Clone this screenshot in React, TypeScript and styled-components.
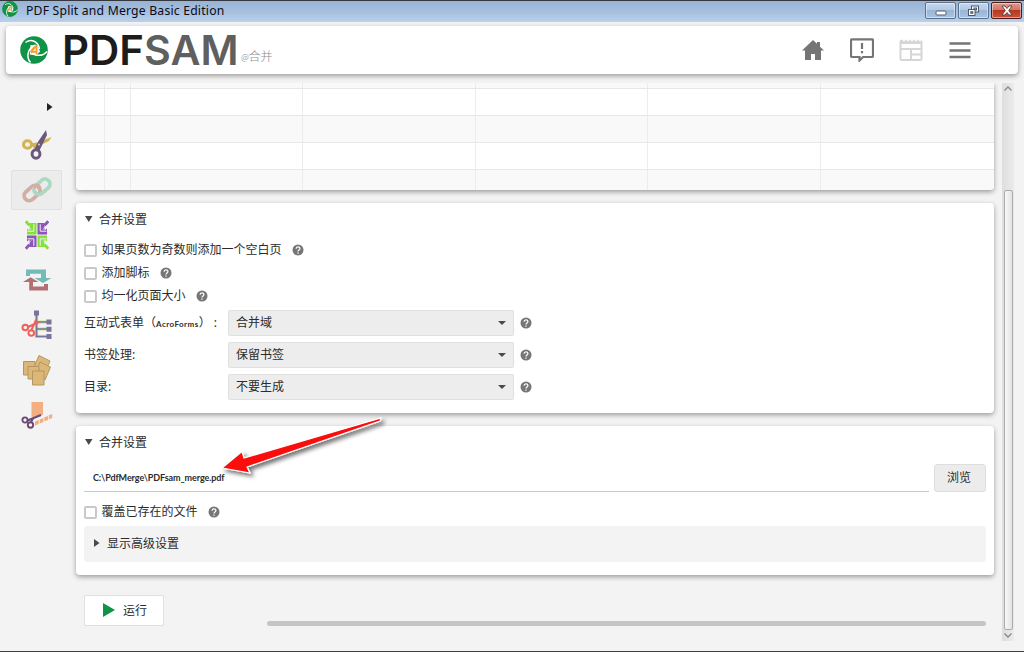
import React from 'react';
import styled, { createGlobalStyle } from 'styled-components';

const Global = createGlobalStyle`
  *{box-sizing:border-box}
  html,body{margin:0;padding:0;overflow:hidden}
  body{font-family:"Noto Sans","Noto Sans CJK SC",sans-serif;font-size:12px;color:#2b2b2b;background:#f3f3f3}
  svg{display:block;flex:none}
`;

const Window = styled.div`
  width:1024px;height:652px;display:flex;flex-direction:column;background:#f3f3f3;overflow:hidden;
  border-bottom:1px solid #3c434f;
`;
const TitleBar = styled.header`
  height:22px;flex:none;display:flex;align-items:flex-start;padding:0 2px 0 2px;
  border-top:1px solid #33383f;background:linear-gradient(#98b3d3,#a4bfdf 50%,#b9d1ea);
`;
const Title = styled.span`
  flex:1;margin-left:8px;font:12.2px/19px "Noto Sans",sans-serif;color:#0a0a12;white-space:nowrap;letter-spacing:.2px;
`;
const WinButton = styled.button<{ $close?: boolean }>`
  width:31px;height:17px;margin:1px 0 0 2px;padding:0;display:flex;align-items:center;justify-content:center;
  border:1px solid ${p => (p.$close ? '#4f1a20' : '#5a718f')};border-radius:2px;
  box-shadow:inset 0 0 0 1px rgba(255,255,255,.45);
  background:${p => (p.$close
    ? 'linear-gradient(#dc9a8c,#cf7764 45%,#b8361f 50%,#c8553a)'
    : 'linear-gradient(#c4d6eb,#b3c9e3 45%,#9ab5d5 50%,#aac4e0)')};
`;
const Header = styled.div`
  flex:none;height:48px;margin:4px 6px 0;padding:0 46px 0 14px;display:flex;align-items:center;
  background:#fff;border-radius:4px;box-shadow:0 2px 5px rgba(0,0,0,.36);
`;
const Brand = styled.div`
  flex:1;display:flex;align-items:center;
`;
const Wordmark = styled.svg`
  margin-left:14px;font-family:Inter,sans-serif;font-size:41px;
`;
const ModuleName = styled.span`
  margin:15px 0 0 1px;font-size:12px;line-height:14px;color:#8c8c8c;font-weight:300;
  i{font-size:9px}
`;
const Tools = styled.nav`
  display:flex;gap:25px;align-items:center;
`;
const Body = styled.div`
  flex:1;min-height:0;margin-top:9px;display:flex;
`;
const Sidebar = styled.aside`
  width:76px;flex:none;padding-left:11px;display:flex;flex-direction:column;gap:5px;
`;
const Expand = styled.div`
  height:37px;padding:20px 0 0 36px;
`;
const ModuleButton = styled.div<{ $active?: boolean }>`
  width:51px;height:40px;display:flex;align-items:center;justify-content:center;border-radius:2px;
  border:1px solid ${p => (p.$active ? '#e0e0e0' : 'transparent')};
  background:${p => (p.$active ? '#ececec' : 'transparent')};
`;
const Main = styled.main`
  box-sizing:content-box;width:918px;flex:none;overflow:hidden;margin-left:-6px;padding:0 8px 0 6px;
  display:flex;flex-direction:column;
`;
const Card = styled.section`
  flex:none;background:#fff;border-radius:4px;box-shadow:0 2px 5px rgba(0,0,0,.36);
`;
const Grid = styled(Card)`
  height:107px;margin-bottom:13px;border-radius:0 0 4px 4px;overflow:hidden;display:flex;flex-direction:column;
`;
const GridRow = styled.div<{ $odd?: boolean; $h: number }>`
  height:${p => p.$h}px;flex:none;display:grid;grid-template-columns:29px 26px 172px 173px 172px 173px 1fr;
  background:${p => (p.$odd ? '#f9f9f9' : '#fff')};
  border-bottom:${p => (p.$h === 21 ? 0 : 1)}px solid #e8e8e8;
  span{border-right:1px solid #ececec}
  span:last-child{border:0}
`;
const Settings = styled(Card)`
  height:210px;padding:7px 8px 8px;margin-bottom:13px;
`;
const Output = styled(Card)`
  height:149px;padding:7px 8px 8px;
`;
const PaneTitle = styled.h2`
  height:18px;margin:0;font-size:12px;font-weight:400;display:flex;align-items:center;gap:6px;
`;
const CheckRow = styled.label`
  height:23px;display:flex;align-items:center;
`;
const Checks = styled.div`
  padding-top:10px;
`;
const Box = styled.i`
  width:13px;height:13px;margin:2px 4px 0 0;border:2px solid #c9c9c9;border-radius:2px;background:#fff;
`;
const CheckText = styled.span`
  margin-right:11px;line-height:18px;padding-left:.4px;
`;
const Fields = styled.div`
  padding-top:3px;display:flex;flex-direction:column;gap:6px;
`;
const Field = styled.div`
  height:26px;display:grid;grid-template-columns:144px 286px 18px;align-items:center;
`;
const FieldLabel = styled.span`
  white-space:nowrap;padding-bottom:2px;
  small{font:700 8px Lato,sans-serif;letter-spacing:.45px}
  b{font-weight:400;margin-left:3px}
`;
const Select = styled.div`
  height:26px;padding:0 7px;display:flex;align-items:center;justify-content:space-between;
  background:#ededed;border:1px solid #e0e0e0;border-radius:2px;
`;
const SelectValue = styled.span`
  padding-bottom:2px;
`;
const HelpSlot = styled.span`
  padding-left:6px;
`;
const FileRow = styled.div`
  height:28px;margin-top:13px;display:flex;justify-content:space-between;
`;
const PathField = styled.div`
  width:845px;height:28px;border-bottom:1px solid #c9c9c9;padding-left:9px;font:700 9px/28px Lato,sans-serif;letter-spacing:-.09px;
`;
const Browse = styled.button`
  width:52px;height:28px;padding:0 2px 2px 0;border:1px solid #dedede;border-radius:3px;background:#ececec;font:inherit;color:inherit;
`;
const Overwrite = styled(CheckRow)`
  margin-top:8px;
`;
const Advanced = styled.div`
  height:36px;margin-top:3px;padding:0 0 2px 10px;display:flex;align-items:center;gap:7px;background:#f3f3f3;border-radius:3px;
`;
const Footer = styled.footer`
  margin:20px 8px 0;display:flex;align-items:flex-end;justify-content:space-between;
`;
const Run = styled.button`
  width:80px;height:31px;padding:0 0 1px 18px;display:flex;align-items:center;gap:8px;background:#fff;
  border:1px solid #dfdfdf;border-radius:2px;font:inherit;color:inherit;
`;
const Progress = styled.div`
  width:719px;height:5px;border-radius:3px;background:#c5c5c5;
`;
const ScrollTrack = styled.div`
  width:12px;height:558px;display:flex;flex-direction:column;align-items:center;justify-content:space-between;
  background:linear-gradient(90deg,#dedede,#ebebeb);
`;
const ScrollThumb = styled.div`
  width:9px;height:440px;margin:96px 0 0 1px;border:1px solid #aaa;border-radius:2px;
  background:linear-gradient(90deg,#f8f8f8,#e3e3e3);
`;
const ArrowOverlay = styled.svg`
  position:absolute;left:215px;top:410px;pointer-events:none;
`;

const Swirl = ({ size }: { size: number }) => (
  <svg width={size} height={size} viewBox="0 0 28 28">
    <circle cx="14" cy="14" r="13.8" fill="#0f9347" />
    <g fill="none" stroke="#fff" strokeWidth="1.5">
      <path d="M5.500 6.500C11 2.500 18 5 19.500 13" />
      <path d="M27 15.500C22 21.500 14 20 10.500 14.500" />
      <path d="M10.500 26.500C5.500 20.500 8 12 15.500 9" />
    </g>
    <path d="M10.500 9L17.500 9.500L20 15.500L16 19.500L9.800 18.500Z" fill="#fff" />
    <path d="M17.500 8.500V18.500H15.700V16.800H12.700L11.500 17.500L10 15.500Q12.500 10.500 17.500 8.500M15.600 12L13.200 14.800H15.600Z" fill="#f5a033" />
  </svg>
);

const Tri = ({ dir, color = '#4a4a4a' }: { dir: 'down' | 'right'; color?: string }) => (
  <svg width={dir === 'down' ? 9 : 6} height={dir === 'down' ? 6 : 8} viewBox={dir === 'down' ? '0 0 9 6' : '0 0 6 8'}>
    <path d={dir === 'down' ? 'M1 0H8.500L4.750 6Z' : 'M0 0L5.500 4L0 8Z'} fill={color} />
  </svg>
);

const Help = () => (
  <svg width="12" height="12" viewBox="0 0 12 12">
    <circle cx="6" cy="6" r="5.500" fill="#767676" />
    <path d="M4.100 4.700C4.100 2.200 7.900 2.200 7.900 4.600C7.900 5.900 6 6 6 7.400M6 8.400V9.700" fill="none" stroke="#fff" strokeWidth="1.250" />
  </svg>
);

const Scissors = () => (
  <svg width="32" height="32" viewBox="0 0 32 32">
    <path d="M10 14.500L18 13L30.500 8L28 12L13 19.500Z" fill="#d2b252" />
    <ellipse cx="6.500" cy="15.500" rx="4" ry="3.700" fill="none" stroke="#d2b252" strokeWidth="3" />
    <path d="M25 1L26 6L18.500 21.500L13 21L17.500 12Z" fill="#6a587b" />
    <ellipse cx="15" cy="25" rx="3.900" ry="4.200" fill="none" stroke="#6a587b" strokeWidth="3" />
    <circle cx="18" cy="15.500" r=".9" fill="#ddd" />
  </svg>
);
const Links = () => (
  <svg width="32" height="28" viewBox="0 0 32 28">
    <g fill="none" strokeWidth="3.800">
      <rect x="2" y="11.700" width="18" height="10" rx="5" transform="rotate(-42 11.500 16.700)" stroke="#d3aea3" />
      <rect x="12" y="5.700" width="18" height="10" rx="5" transform="rotate(-42 21 10.700)" stroke="#abd9c2" />
      <path d="M12.500 11L15.500 9.500Q18.800 9.500 18 13.500" stroke="#d3aea3" />
    </g>
  </svg>
);
const Quarter = ({ color, flip }: { color: string; flip: string }) => (
  <g transform={`matrix(${flip})`}>
    <path d="M4.500 3H11.500V14.500H2V8.500L4.500 10.500Z" fill={color} />
    <path d="M.8 1.200L4.500 5.500" stroke={color} strokeWidth="2.800" fill="none" />
    <path d="M2.500 11.200H8.800V4.200" stroke="#f3f3f3" strokeWidth="1" fill="none" />
    <path d="M2.500 5.500L6 9.500" stroke="#f3f3f3" strokeWidth=".8" fill="none" />
  </g>
);
const Mosaic = () => (
  <svg width="24" height="30" viewBox="0 0 24 30">
    <Quarter color="#83e13a" flip="1 0 0 1 0 0" />
    <Quarter color="#83e13a" flip="-1 0 0 -1 24 30" />
    <Quarter color="#8c55b9" flip="-1 0 0 1 24 0" />
    <Quarter color="#8c55b9" flip="1 0 0 -1 0 30" />
  </svg>
);
const Swap = () => (
  <svg width="30" height="24" viewBox="0 0 30 24">
    <path d="M4 1.500H24V10H29.500L21 15L12.500 10H19V5.800H8V8H4Z" fill="#73bbb7" />
    <path d="M26 22.500H7.200V14H1L8.500 9.300L16.500 14H11V18.500H22V16H26Z" fill="#b37074" />
  </svg>
);
const SplitTree = () => (
  <svg width="32" height="32" viewBox="0 0 32 32">
    <path d="M15.500 5V27.500H28M15.500 13H28M15.500 20H28" stroke="#c9e08b" strokeWidth="3.200" fill="none" />
    <path d="M15.500 5V27.500H28M15.500 13H28M15.500 20H28" stroke="#77759c" strokeWidth="1.700" fill="none" />
    <path d="M13 1.500h5v5h-5zM25.500 10.500h5v5h-5zM25.500 17.700h5v5h-5zM25.500 25h5v5h-5z" fill="#77759c" />
    <g fill="none" stroke="#ee6259" strokeWidth="2">
      <path d="M7 18L18 13M10 22L15 11" />
      <circle cx="4.300" cy="18.500" r="2.800" />
      <circle cx="10.300" cy="24" r="2.800" />
    </g>
  </svg>
);
const Pages = () => (
  <svg width="30" height="32" viewBox="0 0 30 32">
    <g fill="#dcb777" stroke="#b29763" strokeWidth="1">
      <path d="M17 1.500L28 7L22 21L11 15Z" />
      <path d="M18 8L28.500 13L23 26L13 20Z" />
      <path d="M1.500 7.500H13V21H1.500Z" />
      <path d="M6 12.500H17V25H6Z" />
      <path d="M10.500 17H22V31H10.500Z" />
    </g>
  </svg>
);
const CutPage = () => (
  <svg width="32" height="30" viewBox="0 0 32 30">
    <path d="M10.500 2H22V15L10.500 17Z" fill="#f3ae82" />
    <path d="M14 21.500l3.700-1.400v4l-3.700 1.400zM18.700 19.500l3.700-1.400v4l-3.700 1.400zM23.300 17.300l3.700-1.400v4l-3.700 1.400zM27.800 15.300l3.400-1.300v4l-3.400 1.300z" fill="#f3ae82" />
    <g fill="none" stroke="#6b4975" strokeWidth="1.900">
      <path d="M6.500 20.500L20 15M10 22L13 17" />
      <circle cx="4" cy="20" r="2.600" />
      <circle cx="9.500" cy="25" r="2.700" />
    </g>
  </svg>
);

const modules = [Scissors, Links, Mosaic, Swap, SplitTree, Pages, CutPage];
const checks = ['如果页数为奇数则添加一个空白页', '添加脚标', '均一化页面大小'];
const fields: [React.ReactNode, string][] = [
  [<>互动式表单（<small>AcroForms</small>）<b>:</b></>, '合并域'],
  ['书签处理:', '保留书签'],
  ['目录:', '不要生成'],
];
const rows: [number, boolean][] = [[6, true], [27, false], [27, true], [27, false], [21, true]];

const Check = ({ text, as: Row = CheckRow }: { text: string; as?: React.ElementType }) => (
  <Row><Box /><CheckText>{text}</CheckText><Help /></Row>
);

export default function App() {
  return (
    <Window>
      <Global />
      <TitleBar>
        <Swirl size={16} />
        <Title>PDF Split and Merge Basic Edition</Title>
        <WinButton><svg width="12" height="10"><rect x="1" y="5" width="10" height="4" rx="1" fill="#fff" stroke="#525c6b" /></svg></WinButton>
        <WinButton>
          <svg width="13" height="12" stroke="#4d596b">
            <rect x="4.500" y="1" width="7" height="6" fill="#fff" />
            <rect x="7" y="3" width="2.500" height="2" fill="#b3c9e3" />
            <rect x="1.500" y="4.500" width="6.500" height="6" fill="#fff" />
            <rect x="3.800" y="6.700" width="2" height="1.600" fill="#9ab5d5" />
          </svg>
        </WinButton>
        <WinButton $close>
          <svg width="12" height="11" viewBox="0 0 12 11">
            <path d="M1 1h3l2 2.500L8 1h3L7.700 5.500 11 10H8L6 7.500 4 10H1l3.300-4.500z" fill="#fff" stroke="#5c3b41" strokeWidth=".9" />
          </svg>
        </WinButton>
      </TitleBar>
      <Header>
        <Brand>
          <Swirl size={28} />
          <Wordmark width="178" height="48" viewBox="0 0 178 48">
            <text x="0" y="38.500" fontWeight="600" fill="#1c1c1c" textLength="82" lengthAdjust="spacingAndGlyphs">PDF</text>
            <text x="82" y="38.500" fontWeight="600" fill="#5f5f5f" textLength="94.500" lengthAdjust="spacingAndGlyphs">SAM</text>
          </Wordmark>
          <ModuleName><i>@</i>合并</ModuleName>
        </Brand>
        <Tools>
          <svg width="24" height="24" viewBox="0 0 24 24"><path d="M12 2L1 12.500H4V22H10V16H14V22H20V12.500H23L19 8.700V4H16V5.800Z" fill="#757575" /></svg>
          <svg width="24" height="24" viewBox="0 0 24 24" fill="none" stroke="#757575" strokeWidth="2.200">
            <path d="M2 1.300H22Q23 1.300 23 2.300V18Q23 19 22 19H13L9.500 22.500V19H2Q1 19 1 18V2.300Q1 1.300 2 1.300Z" />
            <path d="M12 5V11M12 13V15.300" />
          </svg>
          <svg width="24" height="24" viewBox="0 0 24 24" fill="none" stroke="#d6d6d6" strokeWidth="2">
            <path d="M1.500 3V20.500Q1.500 22 3 22H21Q22.500 22 22.500 20.500V3M1.500 11H22.500M12 11V22M12 16.500H22.500" />
            <path d="M1 2V6H23V2L21 3.500 19 1.500 17 3.500 15 1.500 13 3.500 11 1.500 9 3.500 7 1.500 5 3.500 3 1.500Z" fill="#d6d6d6" stroke="none" />
          </svg>
          <svg width="24" height="24" viewBox="0 0 24 24"><path d="M1.500 5.500H22.500M1.500 12.500H22.500M1.500 19H22.500" stroke="#757575" strokeWidth="2.400" /></svg>
        </Tools>
      </Header>
      <Body>
        <Sidebar>
          <Expand><Tri dir="right" color="#222" /></Expand>
          {modules.map((Icon, i) => <ModuleButton key={i} $active={i === 1}><Icon /></ModuleButton>)}
        </Sidebar>
        <Main>
          <Grid>
            {rows.map(([h, odd], i) => (
              <GridRow key={i} $h={h} $odd={odd}>{[0, 1, 2, 3, 4, 5, 6].map(c => <span key={c} />)}</GridRow>
            ))}
          </Grid>
          <Settings>
            <PaneTitle><Tri dir="down" />合并设置</PaneTitle>
            <Checks>{checks.map(c => <Check key={c} text={c} />)}</Checks>
            <Fields>
              {fields.map(([label, value]) => (
                <Field key={value}>
                  <FieldLabel>{label}</FieldLabel>
                  <Select><SelectValue>{value}</SelectValue><svg width="8" height="4"><path d="M0 0H8L4 4Z" fill="#4a4a4a" /></svg></Select>
                  <HelpSlot><Help /></HelpSlot>
                </Field>
              ))}
            </Fields>
          </Settings>
          <Output>
            <PaneTitle><Tri dir="down" />合并设置</PaneTitle>
            <FileRow>
              <PathField>C:\PdfMerge\PDFsam_merge.pdf</PathField>
              <Browse>浏览</Browse>
            </FileRow>
            <Check text="覆盖已存在的文件" as={Overwrite} />
            <Advanced><Tri dir="right" />显示高级设置</Advanced>
          </Output>
          <Footer>
            <Run><svg width="12" height="14"><path d="M0 0L12 7L0 14Z" fill="#0f9347" /></svg>运行</Run>
            <Progress />
          </Footer>
        </Main>
        <ScrollTrack>
          <svg width="10" height="11" fill="none" stroke="#888" strokeWidth="1.300"><path d="M1.500 7.500L5 4L8.500 7.500" /></svg>
          <ScrollThumb />
          <svg width="10" height="11" fill="none" stroke="#888" strokeWidth="1.300"><path d="M1.500 3.500L5 7L8.500 3.500" /></svg>
        </ScrollTrack>
      </Body>
      <ArrowOverlay width="180" height="75" viewBox="215 410 180 75">
        <defs>
          <filter id="shadow" x="-10%" y="-20%" width="125%" height="160%">
            <feDropShadow dx="3" dy="3" stdDeviation="2" floodColor="#000" floodOpacity=".55" />
          </filter>
        </defs>
        <path d="M222 468L242 451.500L244 458L381 418L380 421L247 467L250 473Z" fill="#f91010" stroke="#fff" strokeWidth="1.200" filter="url(#shadow)" />
      </ArrowOverlay>
    </Window>
  );
}
